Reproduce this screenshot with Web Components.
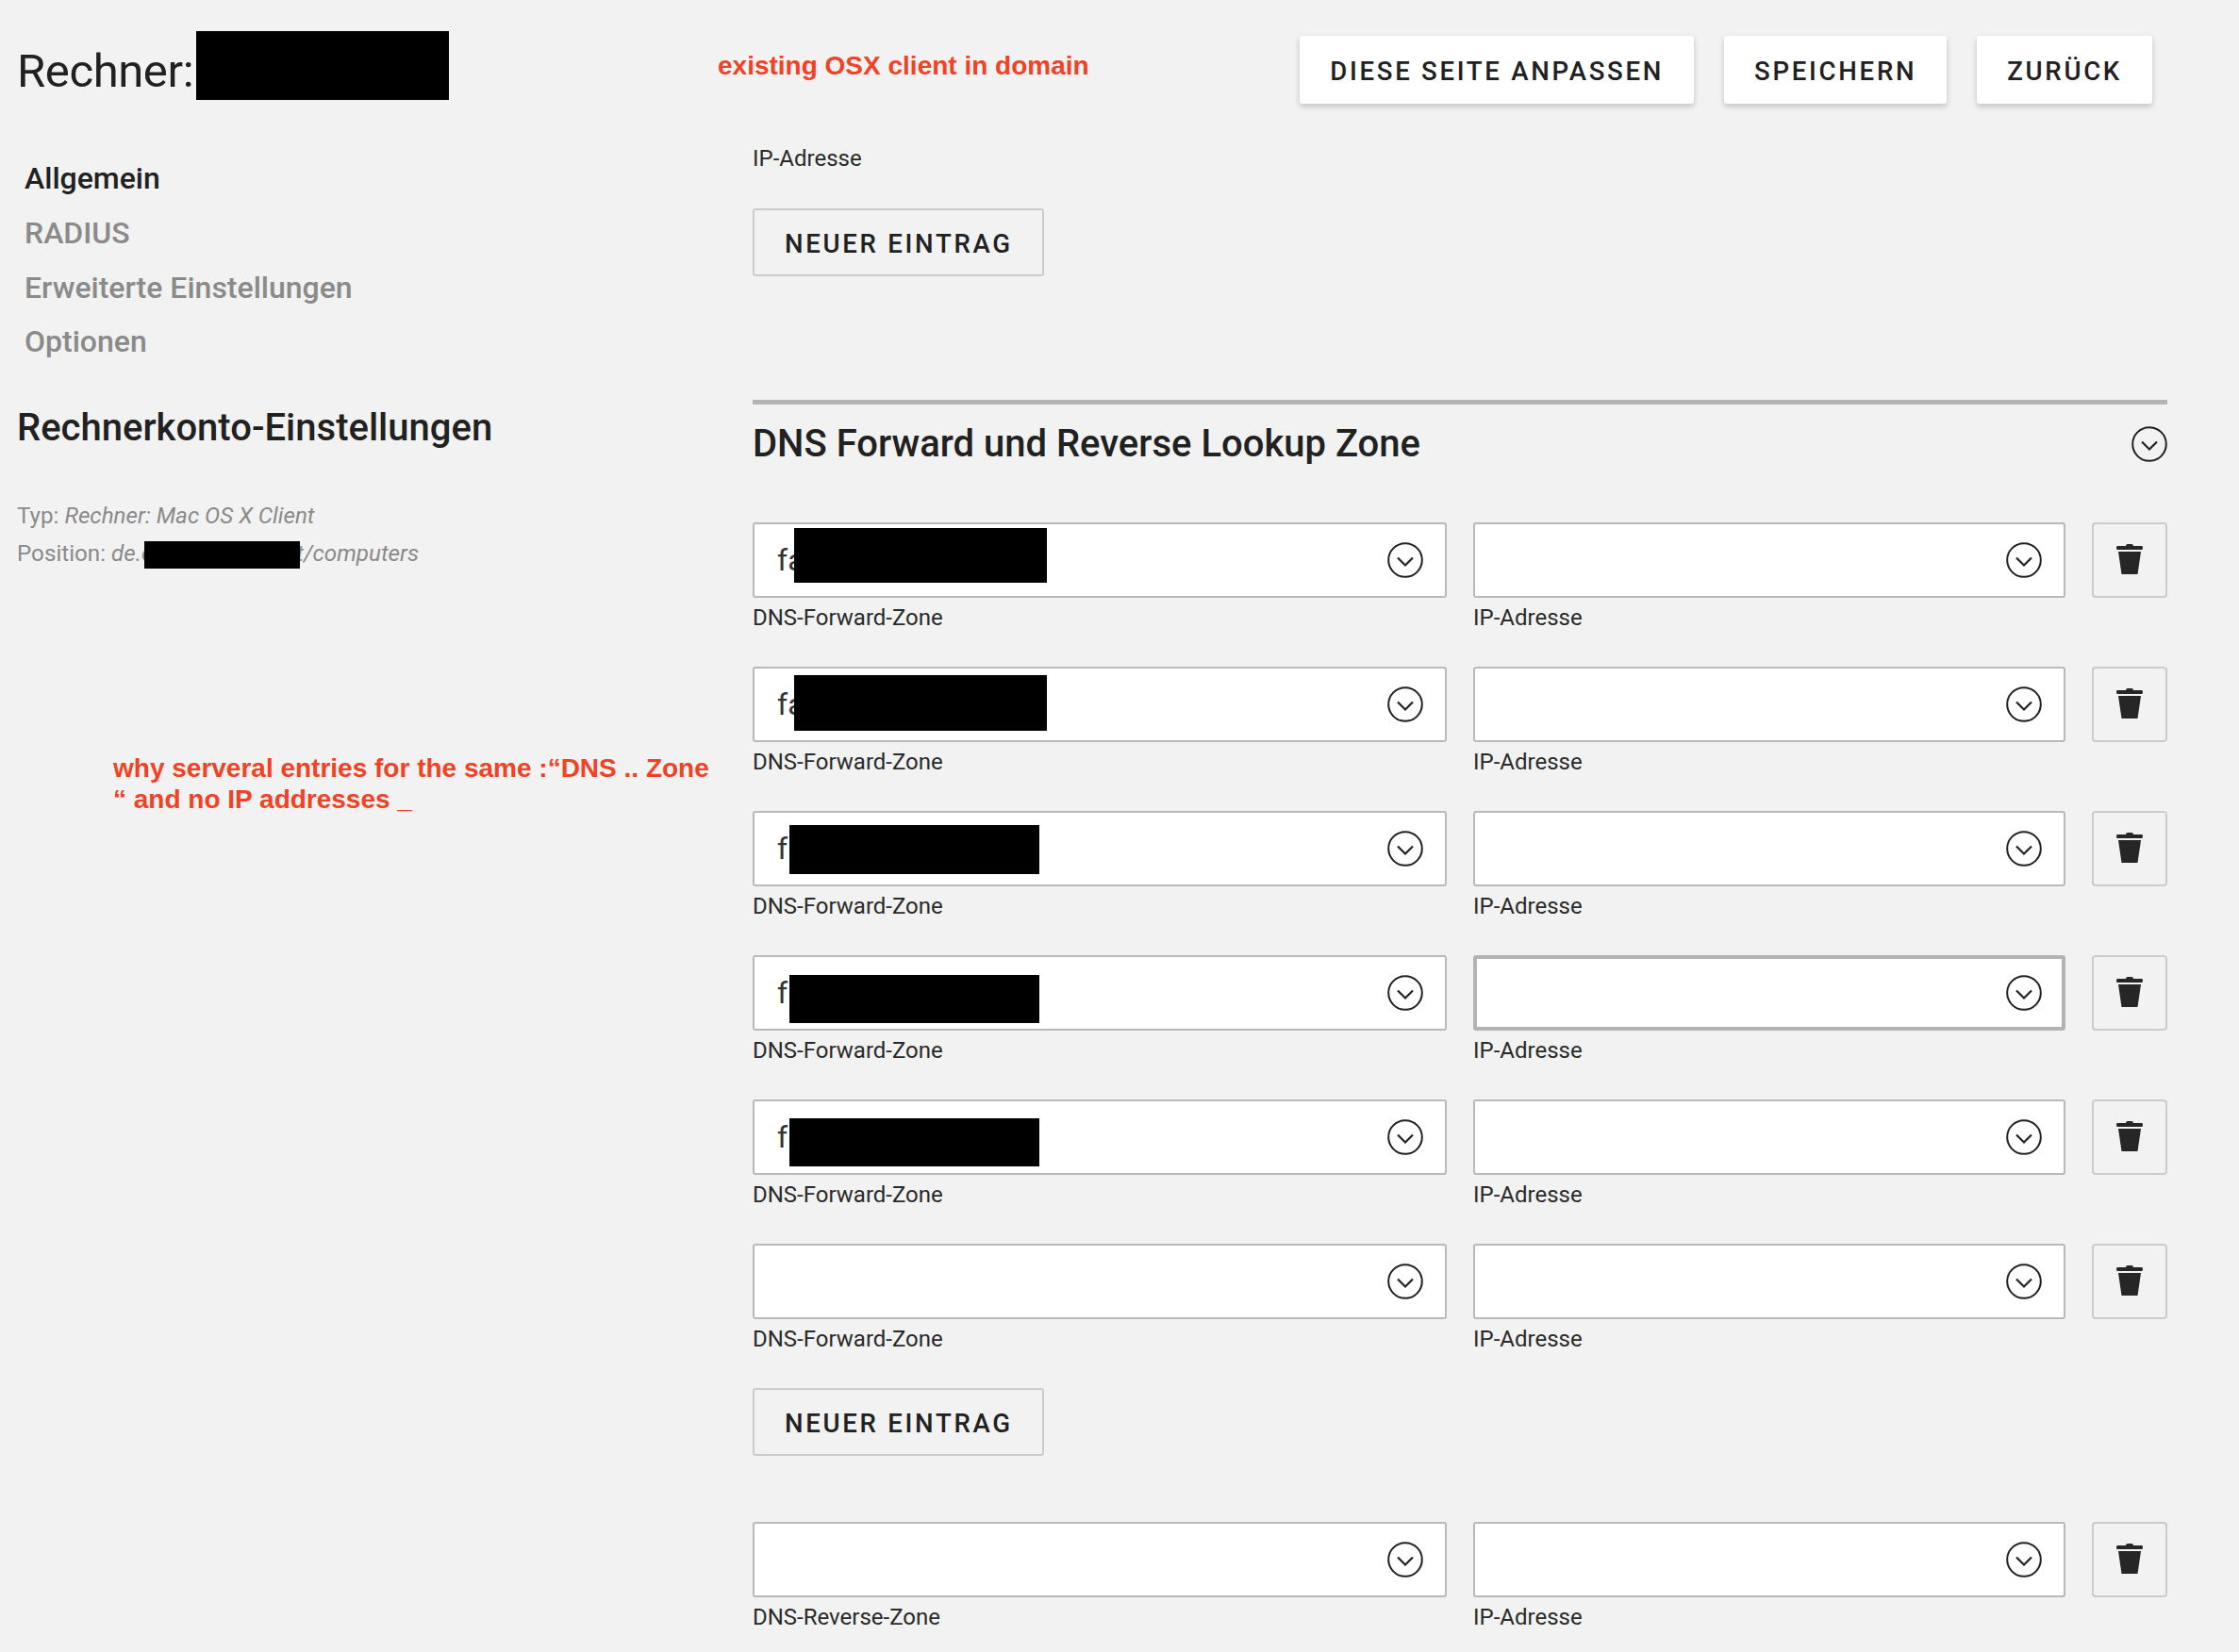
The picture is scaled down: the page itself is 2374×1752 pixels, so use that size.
<!DOCTYPE html>
<html lang="de">
<head>
<meta charset="utf-8">
<title>Rechner</title>
<style>
html, body { margin: 0; padding: 0; background: #f2f2f2; }
body { font-family: Roboto, "Liberation Sans", sans-serif; color: #212121; height: 1752px; overflow: hidden; }
</style>
</head>
<body>
<computer-page>
  <page-sidebar slot="side"></page-sidebar>
  <top-bar slot="main">
    <raised-button>DIESE SEITE ANPASSEN</raised-button>
    <raised-button>SPEICHERN</raised-button>
    <raised-button>ZURÜCK</raised-button>
  </top-bar>
  <dns-section slot="main"></dns-section>
  <red-note slot="notes" style="left:761px;top:53px;white-space:nowrap;">existing OSX client in domain</red-note>
  <red-note slot="notes" style="left:120px;top:798px;width:650px;">why serveral entries for the same :“DNS .. Zone “ and no IP addresses _</red-note>
</computer-page>

<script>
const CHEVRON = `<svg width="38" height="38" viewBox="0 0 38 38" fill="none" stroke="#212121" stroke-width="2"><circle cx="19" cy="19" r="17.8"/><path d="M11 16.5 L19 24.5 L27 16.5" stroke-width="2.2"/></svg>`;
const TRASH = `<svg width="28" height="32" viewBox="0 0 28 32" fill="#262626"><path d="M10 2 Q10 0 12 0 H16 Q18 0 18 2 H27 Q28 2 28 4 Q28 6 27 6 H1 Q0 6 0 4 Q0 2 1 2 Z"/><path d="M2 8 H26 L22.5 32 H5.5 Z"/></svg>`;

class ComputerPage extends HTMLElement {
  constructor() {
    super();
    this.attachShadow({ mode: "open" }).innerHTML = `
      <style>
        :host { display: grid; grid-template-columns: 798px 1500px; position: relative; height: 1752px; }
        .notes { position: absolute; left: 0; top: 0; }
      </style>
      <div><slot name="side"></slot></div>
      <div><slot name="main"></slot></div>
      <div class="notes"><slot name="notes"></slot></div>`;
  }
}

class PageSidebar extends HTMLElement {
  constructor() {
    super();
    this.attachShadow({ mode: "open" }).innerHTML = `
      <style>
        :host { display: block; padding: 33px 0 0 18px; }
        .title { display: flex; align-items: center; height: 73px; font-size: 49px; font-weight: 400; margin: 0; letter-spacing: -0.4px; }
        .title span { padding-top: 11px; }
        .title i { display: block; width: 268px; height: 73px; margin-left: 3px; background: #000; }
        nav { display: flex; flex-direction: column; padding: 55px 0 0 8px; }
        nav a { font-size: 32px; font-weight: 500; line-height: 57.8px; color: #8a8a8a; }
        nav a.on { color: #212121; }
        h2 { font-size: 40px; font-weight: 500; margin: 37px 0 0; line-height: 50px; }
        .meta { margin-top: 48px; font-size: 24.2px; line-height: 40px; color: #8a8a8a; white-space: nowrap; }
        .meta em { font-style: italic; }
        .meta i { display: inline-block; width: 165px; height: 29px; background: #000; vertical-align: -8px; margin: 0 -4px 0 -9px; position: relative; }
      </style>
      <h1 class="title"><span>Rechner:</span><i></i></h1>
      <nav>
        <a class="on">Allgemein</a>
        <a>RADIUS</a>
        <a>Erweiterte Einstellungen</a>
        <a>Optionen</a>
      </nav>
      <h2>Rechnerkonto-Einstellungen</h2>
      <div class="meta">
        <div>Typ: <em>Rechner: Mac OS X Client</em></div>
        <div>Position: <em>de.c<i></i>t/computers</em></div>
      </div>`;
  }
}

class TopBar extends HTMLElement {
  constructor() {
    super();
    this.attachShadow({ mode: "open" }).innerHTML = `
      <style>
        :host { display: flex; justify-content: flex-end; gap: 32px; padding: 38px 16px 0 0; }
      </style>
      <slot></slot>`;
  }
}

class RaisedButton extends HTMLElement {
  constructor() {
    super();
    this.attachShadow({ mode: "open" }).innerHTML = `
      <style>
        :host { display: flex; align-items: center; height: 72px; padding: 2px 32px 0; box-sizing: border-box; background: #fff; border-radius: 3px;
          box-shadow: 0 3px 6px rgba(0,0,0,.2); font-size: 27.6px; font-weight: 500; letter-spacing: 2.7px; white-space: nowrap; color: #212121; }
      </style>
      <slot></slot>`;
  }
}

class OutlineButton extends HTMLElement {
  constructor() {
    super();
    this.attachShadow({ mode: "open" }).innerHTML = `
      <style>
        :host { display: inline-flex; align-items: center; height: 72px; padding: 2px 31px 0 32px; box-sizing: border-box; border: 2px solid #cbcbcb; border-radius: 3px;
          font-size: 27.6px; font-weight: 500; letter-spacing: 2.7px; white-space: nowrap; color: #212121; }
      </style>
      <slot></slot>`;
  }
}

class ZoneField extends HTMLElement {
  constructor() {
    super();
    const value = this.getAttribute("value") || "";
    const red = this.getAttribute("redact");
    let box = "";
    if (red) {
      const [l, t, w, h] = red.split(",");
      box = `<i style="left:${l}px;top:${t}px;width:${w}px;height:${h}px"></i>`;
    }
    this.attachShadow({ mode: "open" }).innerHTML = `
      <style>
        :host { display: block; min-width: 0; }
        .box { position: relative; display: flex; align-items: center; justify-content: space-between; height: 80px; box-sizing: border-box;
          background: #fff; border: 2px solid #b9b9b9; border-radius: 3px; padding: 0 23px 0 24px; font-size: 32px; color: #333; }
        :host([focused]) .box { border: 4px solid #b3b3b3; padding: 0 21px 0 22px; }
        .box i { position: absolute; background: #000; }
        svg { display: block; }
        label { display: block; font-size: 24px; line-height: 30px; margin-top: 6px; color: #2a2a2a; }
      </style>
      <div class="box"><span>${value}</span>${box}${CHEVRON}</div>
      <label>${this.getAttribute("label") || ""}</label>`;
  }
}

class ZoneRow extends HTMLElement {
  constructor() {
    super();
    this.attachShadow({ mode: "open" }).innerHTML = `
      <style>
        :host { display: grid; grid-template-columns: 736px 628px 80px; gap: 28px; height: 153px; }
        .trash { display: flex; align-items: center; justify-content: center; height: 80px; box-sizing: border-box; border: 2px solid #cbcbcb; border-radius: 4px; padding-bottom: 2px; }
        svg { display: block; }
      </style>
      <slot></slot>
      <div class="trash">${TRASH}</div>`;
  }
}

class DnsSection extends HTMLElement {
  constructor() {
    super();
    const row = (a, b, c, d) => `<zone-row>
        <zone-field label="${b}" value="${a}" ${c ? `redact="${c}"` : ""}></zone-field>
        <zone-field label="IP-Adresse" ${d ? "focused" : ""}></zone-field>
      </zone-row>`;
    this.attachShadow({ mode: "open" }).innerHTML = `
      <style>
        :host { display: block; }
        .ip { font-size: 24px; line-height: 30px; margin-top: 43px; color: #2a2a2a; }
        .first { margin-top: 38px; }
        .head { display: flex; align-items: center; justify-content: space-between; margin-top: 131px; border-top: 5px solid #b3b3b3; height: 130px; padding-bottom: 42px; box-sizing: border-box; }
        h3 { margin: 0; font-size: 40px; font-weight: 500; }
        svg { display: block; }
        .rows { display: block; }
        .more { margin: 0 0 70px; }
      </style>
      <div class="ip">IP-Adresse</div>
      <outline-button class="first">NEUER EINTRAG</outline-button>
      <div class="head"><h3>DNS Forward und Reverse Lookup Zone</h3>${CHEVRON}</div>
      <div class="rows">
        ${row("fa", "DNS-Forward-Zone", "42,4,268,58")}
        ${row("fa", "DNS-Forward-Zone", "42,7,268,59")}
        ${row("f", "DNS-Forward-Zone", "37,13,265,52")}
        ${row("f", "DNS-Forward-Zone", "37,19,265,51", true)}
        ${row("f", "DNS-Forward-Zone", "37,18,265,51")}
        ${row("", "DNS-Forward-Zone")}
      </div>
      <outline-button class="more">NEUER EINTRAG</outline-button>
      ${row("", "DNS-Reverse-Zone")}`;
  }
}

class RedNote extends HTMLElement {
  constructor() {
    super();
    this.attachShadow({ mode: "open" }).innerHTML = `
      <style>
        :host { display: block; position: absolute; font-family: "Liberation Sans", Arial, sans-serif; font-weight: 700; font-size: 28px; line-height: 33px; color: #f04326; }
      </style>
      <slot></slot>`;
  }
}

customElements.define("computer-page", ComputerPage);
customElements.define("page-sidebar", PageSidebar);
customElements.define("top-bar", TopBar);
customElements.define("raised-button", RaisedButton);
customElements.define("outline-button", OutlineButton);
customElements.define("zone-field", ZoneField);
customElements.define("zone-row", ZoneRow);
customElements.define("dns-section", DnsSection);
customElements.define("red-note", RedNote);
</script>
</body>
</html>
